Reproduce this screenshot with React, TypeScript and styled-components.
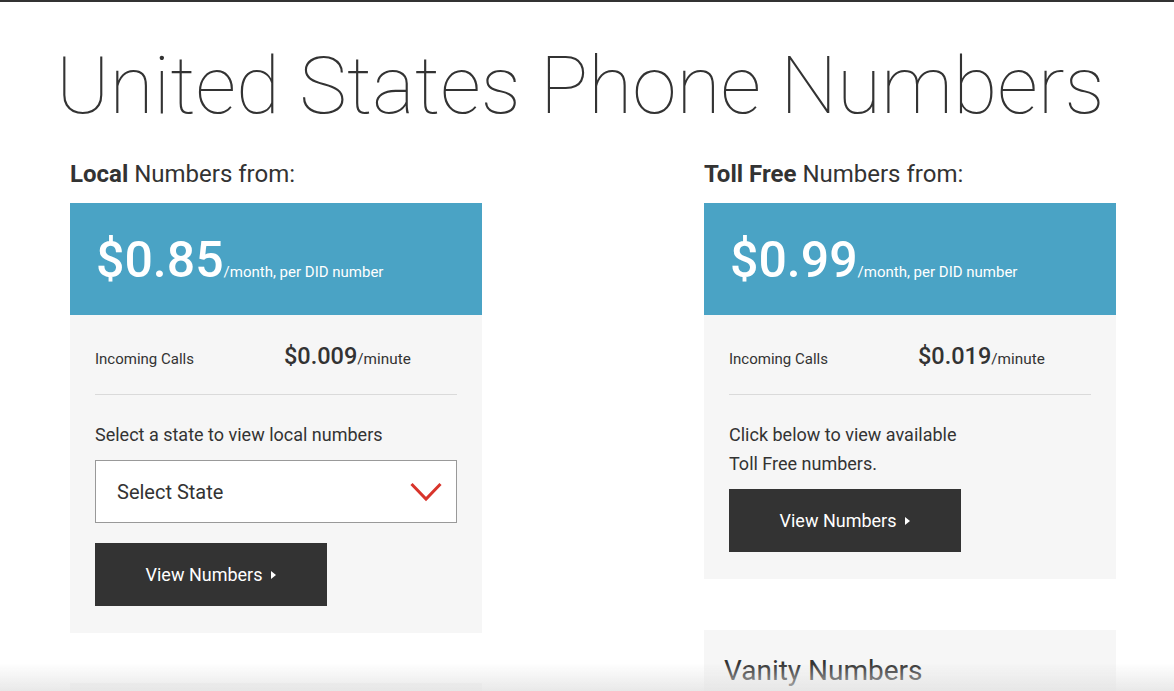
import React from "react";
import styled, { createGlobalStyle } from "styled-components";

const GlobalStyle = createGlobalStyle`
  html, body {
    margin: 0;
    padding: 0;
    background: #fff;
    font-family: Roboto, "Liberation Sans", sans-serif;
    color: #333;
  }
  * {
    box-sizing: border-box;
  }
`;

const Page = styled.div`
  border-top: 2px solid #333;
  min-height: 691px;
`;

const Title = styled.h1`
  margin: 0;
  padding: 34px 0 0 56px;
  font-size: 80.4px;
  font-weight: 100;
  line-height: 100px;
  color: #333;
`;

const Columns = styled.div`
  display: grid;
  grid-template-columns: 412px 412px;
  justify-content: space-between;
  width: 1046px;
  margin: 23px 0 0 70px;
`;

const Column = styled.div`
  display: flex;
  flex-direction: column;
`;

const Heading = styled.h2`
  margin: 0 0 14px;
  font-size: 24px;
  font-weight: 400;
  line-height: 30px;
  color: #333;

  b {
    font-weight: 700;
  }
`;

const PriceBar = styled.div`
  display: flex;
  align-items: baseline;
  height: 112px;
  padding: 27px 26px 0;
  background: #4aa3c5;
  color: #fff;
`;

const BigPrice = styled.span`
  font-size: 50px;
  font-weight: 500;
  line-height: 60px;
`;

const PriceNote = styled.span`
  font-size: 15px;
  font-weight: 400;
`;

const CardBody = styled.div`
  background: #f6f6f6;
  padding: 0 25px 27px;
`;

const RateRow = styled.div`
  display: grid;
  grid-template-columns: 189px 1fr;
  align-items: baseline;
  padding: 27px 0 24px;
  border-bottom: 1px solid #dadada;
`;

const RateLabel = styled.span`
  font-size: 15px;
  color: #333;
`;

const Rate = styled.span`
  font-size: 23.5px;
  font-weight: 500;
  color: #333;

  small {
    font-size: 15.3px;
    font-weight: 400;
  }
`;

const Prompt = styled.p`
  margin: 25px 0 11px;
  font-size: 18px;
  line-height: 29px;
  color: #333;
`;

const SelectBox = styled.div`
  display: flex;
  align-items: center;
  justify-content: space-between;
  height: 63px;
  padding: 0 14px 0 21px;
  background: #fff;
  border: 1px solid #999;
  font-size: 20px;
  color: #333;
`;

const Button = styled.button<{ $top: number }>`
  display: flex;
  align-items: center;
  justify-content: center;
  gap: 9px;
  width: 232px;
  height: 63px;
  margin-top: ${(p) => p.$top}px;
  border: 0;
  background: #333;
  color: #fff;
  font-family: Roboto, "Liberation Sans", sans-serif;
  font-size: 18px;
  cursor: pointer;
`;

const Caret = styled.span`
  width: 0;
  height: 0;
  border-top: 4px solid transparent;
  border-bottom: 4px solid transparent;
  border-left: 5px solid #fff;
`;

const Spacer = styled.div<{ $h: number }>`
  height: ${(p) => p.$h}px;
`;

const MoreCard = styled.div`
  background: #f6f6f6;
  padding: 25px 20px 24px;
  min-height: 80px;
`;

const MoreTitle = styled.h3`
  margin: 0;
  font-size: 28px;
  font-weight: 400;
  line-height: 32px;
  color: #333;
`;

const BottomFade = styled.div`
  position: fixed;
  left: 0;
  right: 0;
  bottom: 0;
  height: 28px;
  pointer-events: none;
  background: linear-gradient(to bottom, rgba(230, 230, 230, 0), rgba(225, 225, 225, 0.75));
`;

const Chevron = () => (
  <svg width="32" height="20" viewBox="0 0 32 20">
    <path d="M1.5 2 L16 17 L30.5 2" fill="none" stroke="#d8342b" strokeWidth="3" />
  </svg>
);

const App: React.FC = () => {
  return (
    <>
      <GlobalStyle />
      <Page>
        <Title>United States Phone Numbers</Title>
        <Columns>
          <Column>
            <Heading>
              <b>Local</b> Numbers from:
            </Heading>
            <PriceBar>
              <BigPrice>$0.85</BigPrice>
              <PriceNote>/month, per DID number</PriceNote>
            </PriceBar>
            <CardBody>
              <RateRow>
                <RateLabel>Incoming Calls</RateLabel>
                <Rate>
                  $0.009<small>/minute</small>
                </Rate>
              </RateRow>
              <Prompt>Select a state to view local numbers</Prompt>
              <SelectBox>
                <span>Select State</span>
                <Chevron />
              </SelectBox>
              <Button $top={20}>
                View Numbers <Caret />
              </Button>
            </CardBody>
            <Spacer $h={50} />
            <MoreCard />
          </Column>
          <Column>
            <Heading>
              <b>Toll Free</b> Numbers from:
            </Heading>
            <PriceBar>
              <BigPrice>$0.99</BigPrice>
              <PriceNote>/month, per DID number</PriceNote>
            </PriceBar>
            <CardBody>
              <RateRow>
                <RateLabel>Incoming Calls</RateLabel>
                <Rate>
                  $0.019<small>/minute</small>
                </Rate>
              </RateRow>
              <Prompt>
                Click below to view available
                <br />
                Toll Free numbers.
              </Prompt>
              <Button $top={0}>
                View Numbers <Caret />
              </Button>
            </CardBody>
            <Spacer $h={51} />
            <MoreCard>
              <MoreTitle>Vanity Numbers</MoreTitle>
            </MoreCard>
          </Column>
        </Columns>
      </Page>
      <BottomFade />
    </>
  );
};

export default App;
